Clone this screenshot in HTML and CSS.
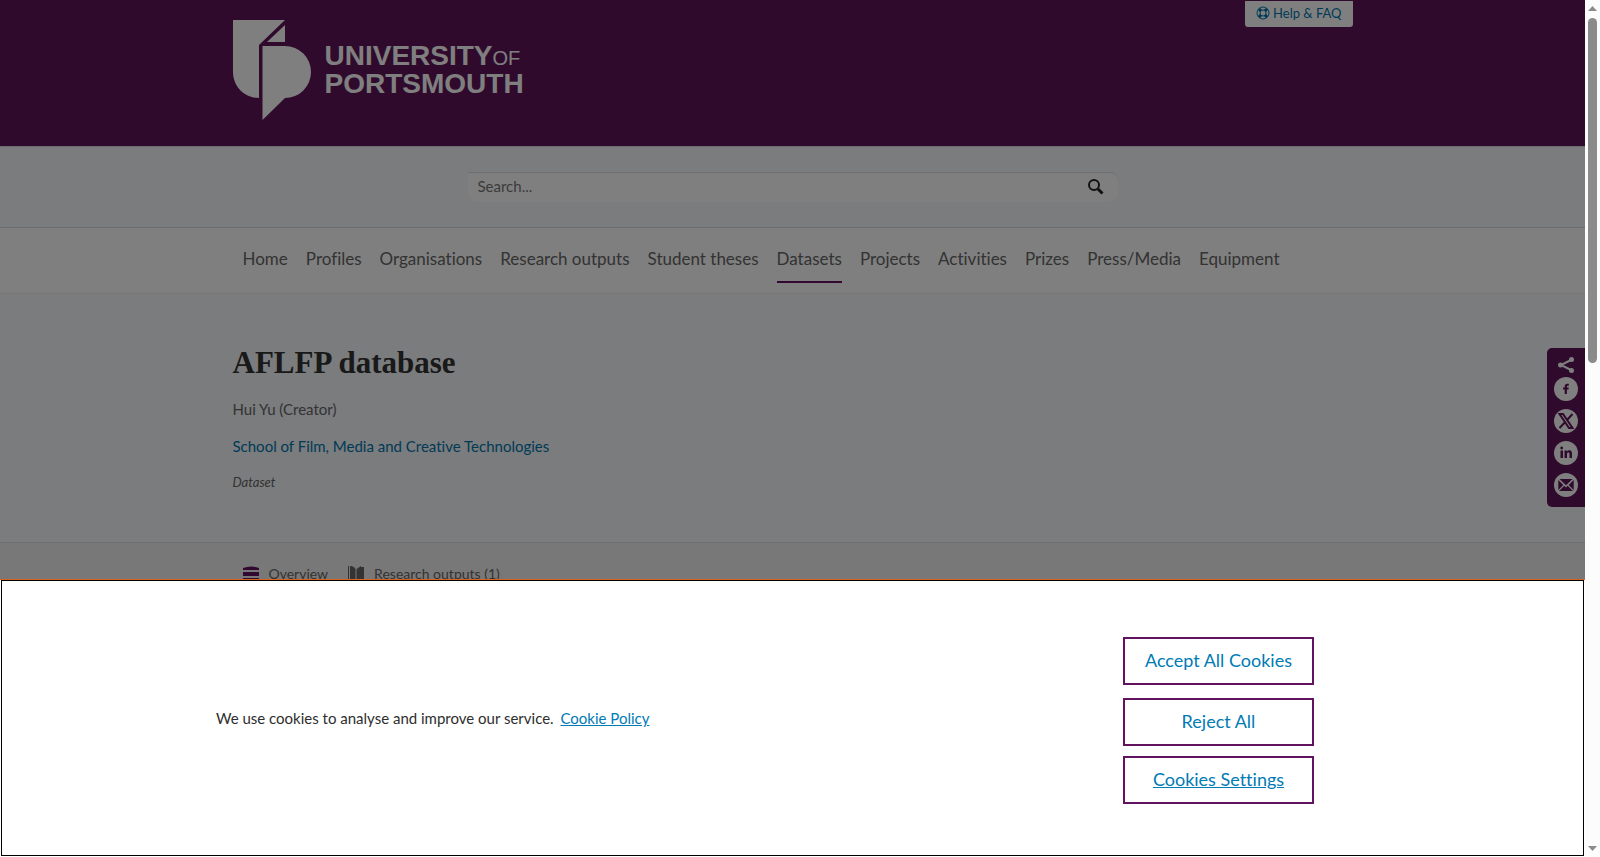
FILE: index.html
```
<!DOCTYPE html>
<html lang="en">
<head>
    <meta charset="UTF-8">
    <meta name="viewport" content="width=device-width, initial-scale=1.0">
    <title>AFLFP database - University of Portsmouth</title>
    <link rel="stylesheet" href="styles.css">
</head>
<body>
    <div class="page">
        <header class="site-header">
            <div class="container header-inner">
                <a class="logo" href="#">
                    <svg class="logo-mark" viewBox="0 0 78 100" aria-hidden="true">
                        <path d="M0 0H52L26 25V78C11 78 0 66 0 52Z"/>
                        <path d="M52 5V22H34Z"/>
                        <path d="M29.5 26H52A26 26 0 0 1 52 78L29.5 100Z"/>
                    </svg>
                    <span class="logo-text">UNIVERSITY<small>OF</small><br>PORTSMOUTH</span>
                </a>
                <a class="help" href="#">
                    <svg viewBox="0 0 14 14" aria-hidden="true">
                        <circle cx="7" cy="7" r="6"/>
                        <circle cx="7" cy="7" r="3"/>
                        <path class="ring" d="M2.8 2.8L4.9 4.9M11.2 2.8L9.1 4.9M2.8 11.2L4.9 9.1M11.2 11.2L9.1 9.1"/>
                    </svg>
                    Help &amp; FAQ
                </a>
            </div>
        </header>

        <div class="search-bar">
            <form class="search">
                <input type="text" placeholder="Search..." aria-label="Search">
                <button type="button" aria-label="Search">
                    <svg viewBox="0 0 16 16"><circle cx="6" cy="6" r="5"/><path d="M10 10L14.5 14.5"/></svg>
                </button>
            </form>
        </div>

        <nav class="main-nav">
            <div class="container nav-inner">
                <a href="#">Home</a>
                <a href="#">Profiles</a>
                <a href="#">Organisations</a>
                <a href="#">Research outputs</a>
                <a href="#">Student theses</a>
                <a href="#" class="active">Datasets</a>
                <a href="#">Projects</a>
                <a href="#">Activities</a>
                <a href="#">Prizes</a>
                <a href="#">Press/Media</a>
                <a href="#">Equipment</a>
            </div>
        </nav>

        <main class="intro">
            <div class="container">
                <h1>AFLFP database</h1>
                <p>Hui Yu (Creator)</p>
                <p><a href="#">School of Film, Media and Creative Technologies</a></p>
                <p class="type">Dataset</p>
            </div>
        </main>

        <div class="tabs">
            <div class="container tabs-inner">
                <a href="#">
                    <svg class="purple" viewBox="0 0 16 16" aria-hidden="true">
                        <path d="M0 2Q8 -1 16 2V4H0ZM0 6H16V10H0ZM0 12H16V14Q8 17 0 14Z"/>
                    </svg>
                    Overview
                </a>
                <a href="#">
                    <svg viewBox="0 0 16 16" aria-hidden="true">
                        <path d="M0 0H1V13H0ZM2 0Q6 0 7.5 3V15Q6 13 2 13ZM8.5 3L13 0V12L8.5 15ZM13 1H16V14H11L13 12Z"/>
                    </svg>
                    Research outputs (1)
                </a>
            </div>
        </div>

        <aside class="share">
            <svg class="share-icon" viewBox="0 0 16 16" aria-hidden="true">
                <path d="M13 3L3 8L13 13"/>
                <circle cx="13.5" cy="2.5" r="2.5"/><circle cx="2.5" cy="8" r="2.5"/><circle cx="13.5" cy="13.5" r="2.5"/>
            </svg>
            <a href="#" aria-label="Facebook">
                <svg viewBox="0 0 24 24"><circle cx="12" cy="12" r="12"/><path class="cut" d="M10.7 17V12.5H9V10.6H10.7V9.4C10.7 7.6 11.6 6.8 13.2 6.8H14.8V8.8H13.8C13.1 8.8 12.9 9.1 12.9 9.7V10.6H14.8L14.5 12.5H12.9V17Z"/></svg>
            </a>
            <a href="#" aria-label="X">
                <svg viewBox="0 0 24 24"><circle cx="12" cy="12" r="12"/><path class="line" d="M5.5 5H9L18.5 19H15ZM18.5 5L13 11M11 13.2L5.5 19"/></svg>
            </a>
            <a href="#" aria-label="LinkedIn">
                <svg viewBox="0 0 24 24"><circle cx="12" cy="12" r="12"/><path class="cut" d="M6.5 9.5H9V17H6.5ZM6.3 7A1.4 1.4 0 1 1 9.1 7A1.4 1.4 0 1 1 6.3 7ZM10.5 9.5H12.9V10.5C13.5 9.6 14.4 9.2 15.4 9.2C17.4 9.2 18 10.5 18 12.5V17H15.5V13C15.5 11.9 15.2 11.4 14.4 11.4C13.4 11.4 13 12.1 13 13.1V17H10.5Z"/></svg>
            </a>
            <a href="#" aria-label="Email">
                <svg viewBox="0 0 24 24"><circle cx="12" cy="12" r="12"/><path class="cut" d="M5.5 6H18.5L12 12.2ZM4.3 7L9.3 11.9L4.3 17ZM19.7 7V17L14.7 11.9ZM10.3 12.8L12 14.4L13.7 12.8L19 18H5Z"/></svg>
            </a>
        </aside>

        <div class="overlay"></div>

        <section class="cookies" aria-label="Cookie banner">
            <p>We use cookies to analyse and improve our service. <a href="#">Cookie Policy</a></p>
            <div class="cookie-buttons">
                <button type="button">Accept All Cookies</button>
                <button type="button">Reject All</button>
                <button type="button" class="settings">Cookies Settings</button>
            </div>
        </section>
    </div>

    <div class="scrollbar" aria-hidden="true">
        <svg viewBox="0 0 9 5"><path d="M0 5L4.5 0L9 5Z"/></svg>
        <div class="track"><div class="thumb"></div></div>
        <svg viewBox="0 0 9 5"><path d="M0 0H9L4.5 5Z"/></svg>
    </div>
</body>
</html>
```
FILE: styles.css
```
* {
    box-sizing: border-box;
}
body {
    margin: 0;
    display: flex;
    height: 100vh;
    overflow: hidden;
    font-family: Lato, sans-serif;
    font-size: 15px;
    line-height: 20px;
    font-variant-ligatures: none;
    color: #666;
}
a {
    color: #0077ad;
    text-decoration: none;
}
svg {
    fill: currentColor;
    flex: none;
}
.page {
    position: relative;
    flex: 1;
    overflow: hidden;
    background: #f1f1f1;
}
.container {
    max-width: 1120px;
    margin: 0 auto;
}

/* header */
.site-header {
    background: #5e1458;
}
.header-inner {
    display: flex;
    justify-content: space-between;
    align-items: flex-start;
    padding-bottom: 26px;
}
.logo {
    display: flex;
    align-items: center;
    gap: 14px;
    padding-top: 20px;
    color: #fff;
}
.logo-mark {
    width: 78px;
    height: 100px;
}
.logo-text {
    font: bold 28px/26px "Liberation Sans", sans-serif;
}
.logo-text small {
    font-size: 20px;
    font-weight: normal;
}
.help {
    display: flex;
    align-items: center;
    gap: 3px;
    margin-top: 1px;
    padding: 2px 11px 4px;
    background: #fff;
    border-radius: 0 0 3px 3px;
    font-size: 13px;
}
.help svg {
    width: 14px;
    height: 14px;
    fill: none;
    stroke: currentColor;
}
.help .ring {
    stroke-width: 3;
}

/* search */
.search-bar {
    padding: 25px 20px;
    background: #f6f8fb;
    border-top: 1px solid #d8d8dc;
    border-bottom: 1px solid #d4d6d8;
}
.search {
    display: flex;
    max-width: 650px;
    height: 30px;
    margin: 0 auto;
    background: #fff;
    border-top: 1px solid #ddd;
    border-radius: 2px 8px 10px 10px;
}
.search input {
    flex: 1;
    padding: 0 10px 3px;
    border: 0;
    background: none;
    font: 15px Lato, sans-serif;
}
.search input::placeholder {
    color: #777;
}
.search button {
    padding: 0 14px 2px;
    border: 0;
    background: none;
    color: #222;
}
.search svg {
    display: block;
    width: 16px;
    height: 16px;
    fill: none;
    stroke: currentColor;
    stroke-width: 2;
}
.search path {
    stroke-width: 3;
}

/* navigation */
.main-nav {
    background: #fff;
    border-bottom: 1px solid #eee;
}
.nav-inner {
    display: flex;
    gap: 18px;
    padding: 14px 10px 10px;
}
.nav-inner a {
    padding: 4px 0 9px;
    border-bottom: 2px solid transparent;
    color: #666;
    font-size: 17px;
    line-height: 26px;
    white-space: nowrap;
}
.nav-inner .active {
    border-color: #621360;
}

/* dataset intro */
.intro {
    padding: 49px 0 51px;
    background: #f6f8fb;
    border-bottom: 1px solid #ddd;
}
.intro h1 {
    margin: 0 0 16px;
    font: bold 31px/40px "Liberation Serif", serif;
    color: #333;
}
.intro p {
    margin: 0 0 17px;
}
.intro .type {
    margin: 0;
    font-size: 13px;
    line-height: 18px;
    font-style: italic;
}
.tabs-inner {
    display: flex;
    gap: 20px;
    padding: 21px 10px;
}
.tabs a {
    display: flex;
    align-items: center;
    gap: 10px;
    color: #666;
    font-size: 14px;
}
.tabs svg {
    width: 16px;
    height: 16px;
}
.tabs .purple {
    color: #621360;
}

/* share bar */
.share {
    position: absolute;
    top: 348px;
    right: 0;
    display: flex;
    flex-direction: column;
    align-items: center;
    gap: 8px;
    padding: 9px 7px 10px;
    background: #5e1458;
    border-radius: 5px 0 0 5px;
}
.share a,
.share svg {
    display: block;
    width: 24px;
    height: 24px;
    color: #fff;
}
.share .share-icon {
    width: 16px;
    height: 16px;
    margin-bottom: -4px;
}
.share-icon path {
    fill: none;
    stroke: #fff;
    stroke-width: 2;
}
.share .cut {
    fill: #5e1458;
}
.share .line {
    fill: none;
    stroke: #5e1458;
    stroke-width: 2;
}

/* cookie banner */
.overlay {
    position: absolute;
    inset: 0;
    background: rgba(0, 0, 0, 0.5);
}
.cookies {
    position: absolute;
    left: 0;
    right: 0;
    bottom: 0;
    display: flex;
    justify-content: space-between;
    align-items: center;
    padding: 57px 271px 53px 216px;
    background: #fff;
    border-top: 1px solid #d9631e;
    outline: 1px solid #000;
    outline-offset: -2px;
    color: #2e2e2e;
}
.cookies p {
    margin: 0;
    padding-bottom: 5px;
}
.cookies a {
    margin-left: 3px;
    color: #007bb5;
    text-decoration: underline;
}
.cookie-buttons {
    display: flex;
    flex-direction: column;
    gap: 13px;
}
.cookie-buttons button {
    height: 48px;
    padding: 0 20px 2px;
    border: 2px solid #621360;
    background: #fff;
    color: #007bb5;
    font: 18px Lato, sans-serif;
    font-variant-ligatures: none;
}
.cookie-buttons .settings {
    margin-top: -3px;
    text-decoration: underline;
}

/* scrollbar */
.scrollbar {
    display: flex;
    flex-direction: column;
    align-items: center;
    gap: 7px;
    width: 15px;
    padding: 6px 0;
    background: #fcfcfc;
    color: #8b8b8b;
}
.scrollbar svg {
    width: 9px;
    height: 5px;
}
.track {
    flex: 1;
}
.thumb {
    width: 9px;
    height: 42%;
    border-radius: 5px;
    background: #8b8b8b;
}
```
